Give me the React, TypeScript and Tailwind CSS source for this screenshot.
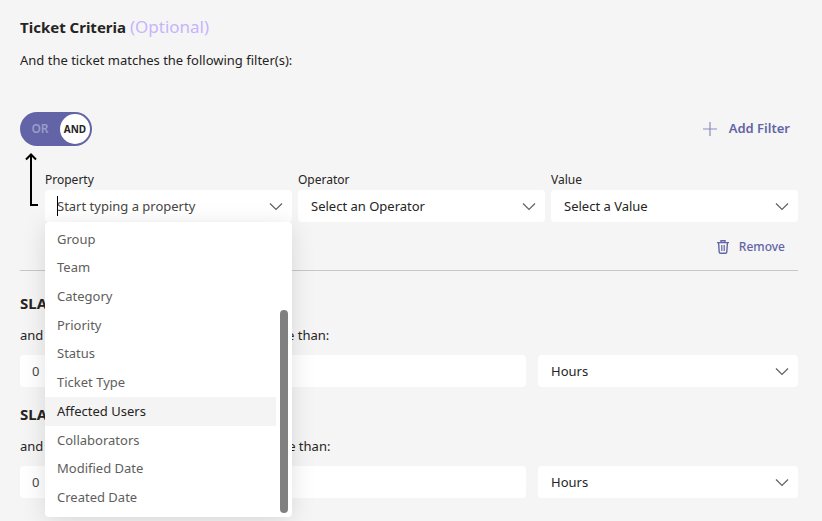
import { useState } from "react";
import type { ReactNode } from "react";

const PROPERTIES = [
  "Group",
  "Team",
  "Category",
  "Priority",
  "Status",
  "Ticket Type",
  "Affected Users",
  "Collaborators",
  "Modified Date",
  "Created Date",
];

function Chevron() {
  return (
    <svg
      className="pointer-events-none absolute right-2 top-1/2 h-4 w-4 -translate-y-1/2"
      viewBox="0 0 16 16"
      fill="none"
      stroke="#616161"
      strokeWidth="1.2"
    >
      <path d="M2 5.5l6 6 6-6" />
    </svg>
  );
}

interface SelectBoxProps {
  id: string;
  label?: string;
  options: string[];
}

function SelectBox({ id, label, options }: SelectBoxProps) {
  return (
    <div className="relative">
      <select
        id={id}
        aria-label={label}
        className="block h-8 w-full appearance-none rounded bg-white pl-[13px] pr-8 pt-0.5 text-[13px] text-[#252423] outline-none"
      >
        {options.map((option) => (
          <option key={option}>{option}</option>
        ))}
      </select>
      <Chevron />
    </div>
  );
}

interface FieldProps {
  id: string;
  label: string;
  children: ReactNode;
}

function Field({ id, label, children }: FieldProps) {
  return (
    <div className="relative min-w-0">
      <label htmlFor={id} className="block text-xs leading-5 text-[#252423]">
        {label}
      </label>
      {children}
    </div>
  );
}

function PropertyMenu() {
  return (
    <div className="absolute inset-x-0 top-full z-10 rounded bg-white pb-[5px] pt-[3px] shadow-[0_4px_24px_rgba(0,0,0,0.12)]">
      <ul role="listbox" aria-label="Property" className="mr-4 flex h-[287px] flex-col">
        {PROPERTIES.map((name) => {
          const active = name === "Affected Users";
          return (
            <li
              key={name}
              role="option"
              aria-selected={active}
              className={`flex flex-1 items-center px-3 text-[13px] ${
                active ? "bg-[#f4f4f4] text-[#252423]" : "text-[#605e5c]"
              }`}
            >
              {name}
            </li>
          );
        })}
      </ul>
      <div className="absolute bottom-1 right-1 h-[203px] w-2 rounded-full bg-[#808080]" />
    </div>
  );
}

interface SlaSectionProps {
  id: string;
  title: string;
  text: string;
}

function SlaSection({ id, title, text }: SlaSectionProps) {
  return (
    <section className="pb-[15px]">
      <h2 className="text-[15px] font-bold leading-6">{title}</h2>
      <label htmlFor={id} className="mt-2 block text-[13px] leading-6">
        {text}
      </label>
      <div className="mt-2 flex gap-3">
        <input
          id={id}
          type="text"
          inputMode="numeric"
          defaultValue="0"
          className="h-8 min-w-0 flex-1 rounded bg-white px-3 text-[13px] text-[#484644] outline-none"
        />
        <div className="w-65">
          <SelectBox id={`${id}-unit`} label="Unit" options={["Hours", "Minutes", "Days"]} />
        </div>
      </div>
    </section>
  );
}

export default function App() {
  const [matchAll, setMatchAll] = useState(true);

  return (
    <main className="h-screen overflow-hidden bg-[#f5f5f5] pl-5 pr-6 pt-[15px] font-['Noto_Sans','Open_Sans',sans-serif] text-[#252423]">
      <h1 className="text-[15px] font-bold leading-6">
        Ticket Criteria <span className="text-[17px] font-normal text-[#c5b5fb]">(Optional)</span>
      </h1>
      <p className="mt-[9px] text-[13px] leading-6">
        And the ticket matches the following filter(s):
      </p>

      <div className="mt-10 flex items-center justify-between pr-2">
        <button
          type="button"
          role="switch"
          aria-checked={matchAll}
          onClick={() => setMatchAll(!matchAll)}
          className="flex h-[34px] w-[72px] items-center rounded-full bg-[#6264a7] p-0.5"
        >
          <span className="flex-1 pr-0.5 text-center text-xs font-semibold text-[#9a9bc9]">OR</span>
          <span className="flex h-[30px] w-[30px] items-center justify-center rounded-full bg-white text-[10px] font-bold">
            AND
          </span>
        </button>
        <button type="button" className="flex items-center gap-3 text-[13px] font-semibold text-[#6264a7]">
          <svg className="h-3.5 w-3.5" viewBox="0 0 14 14" fill="none" stroke="#8b8cc0" strokeWidth="1.2">
            <path d="M7 0v14M0 7h14" />
          </svg>
          Add Filter
        </button>
      </div>

      <div className="flex">
        <svg
          className="mt-1.5 h-14 w-[25px] shrink-0"
          viewBox="0 0 25 56"
          fill="none"
          stroke="#000"
          strokeWidth="2"
        >
          <path d="M11 2v51h7" />
          <path d="M6 7.5l5-5 5 5" />
        </svg>
        <div className="mt-6 grid flex-1 grid-cols-3 gap-1.5">
          <Field id="property" label="Property">
            <div className="relative">
              <input
                id="property"
                type="text"
                role="combobox"
                aria-expanded="true"
                placeholder="Start typing a property"
                className="block h-8 w-full rounded bg-white pl-3 pr-8 text-[13px] outline-none placeholder:text-[#484644]"
              />
              <span className="absolute left-3 top-1.5 h-5 w-px bg-black" />
              <Chevron />
            </div>
            <PropertyMenu />
          </Field>
          <Field id="operator" label="Operator">
            <SelectBox id="operator" options={["Select an Operator"]} />
          </Field>
          <Field id="value" label="Value">
            <SelectBox id="value" options={["Select a Value"]} />
          </Field>
        </div>
      </div>

      <div className="flex justify-end border-b border-[#c8c8c8] pb-3 pr-[13px] pt-[13px]">
        <button type="button" className="flex items-center gap-2.5 text-xs font-medium leading-[23px] text-[#6264a7]">
          <svg className="h-3.5 w-3" viewBox="0 0 12 14" fill="none" stroke="#6264a7" strokeWidth="1.4">
            <path d="M0 2.6h12M4 2V.8h4V2M1.6 3l.6 9q.1 1.3 1.3 1.3h5q1.2 0 1.3-1.3l.6-9" />
            <path d="M4.8 5v6M7.2 5v6" strokeWidth="1.2" />
          </svg>
          Remove
        </button>
      </div>

      <div className="pt-5">
        <SlaSection
          id="respond"
          title="SLA First Response"
          text="and the ticket has not been claimed for more than:"
        />
        <SlaSection
          id="resolve"
          title="SLA Resolution"
          text="and the ticket has not been finished for more than:"
        />
      </div>
    </main>
  );
}
